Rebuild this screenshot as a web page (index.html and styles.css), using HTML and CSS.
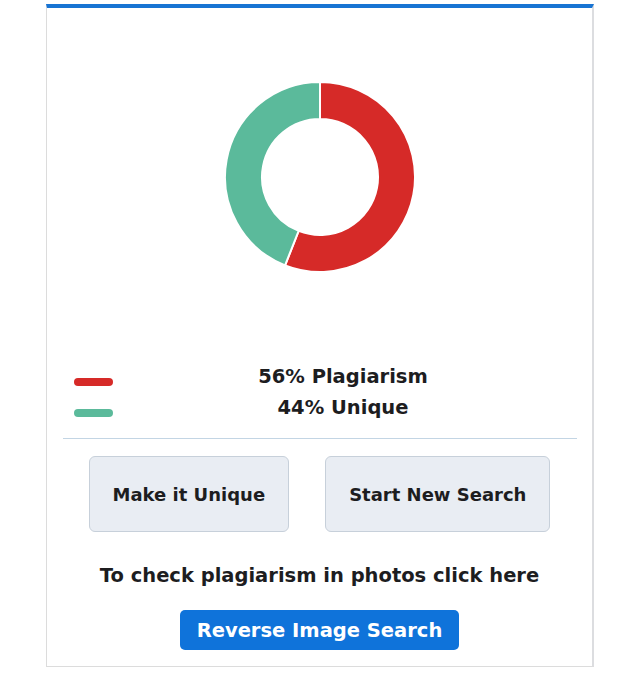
FILE: index.html
```html
<!DOCTYPE html>
<html lang="en">
<head>
    <meta charset="UTF-8">
    <meta name="viewport" content="width=device-width, initial-scale=1.0">
    <title>Plagiarism Report</title>
    <link rel="stylesheet" href="styles.css">
</head>
<body>
    <div class="page">
        <div class="result-card">
            <div class="chart">
                <svg width="192" height="192" viewBox="-96 -96 192 192">
                    <!-- 56% plagiarism, starts at 12 o'clock and runs clockwise -->
                    <path d="M 0 -95 A 95 95 0 1 1 -34.95 88.33 L -21.33 53.93 A 58 58 0 1 0 0 -58 Z" fill="#d62a28" stroke="#fff" stroke-width="2"/>
                    <path d="M -34.95 88.33 A 95 95 0 0 1 0 -95 L 0 -58 A 58 58 0 0 0 -21.33 53.93 Z" fill="#5bba9b" stroke="#fff" stroke-width="2"/>
                </svg>
            </div>

            <div class="legend">
                <span class="swatch red"></span>
                <span class="legend-text">56% Plagiarism</span>
                <span class="swatch green"></span>
                <span class="legend-text">44% Unique</span>
            </div>

            <hr class="divider">

            <div class="actions">
                <button class="btn-light" type="button">Make it Unique</button>
                <button class="btn-light" type="button">Start New Search</button>
            </div>

            <p class="photo-note">To check plagiarism in photos click here</p>
            <div class="photo-action">
                <button class="btn-blue" type="button">Reverse Image Search</button>
            </div>
        </div>
    </div>
</body>
</html>
```

FILE: styles.css
```css
/* General Reset */
* {
    margin: 0;
    padding: 0;
    box-sizing: border-box;
    font-family: 'DejaVu Sans', 'Liberation Sans', sans-serif;
}

body {
    background: #fff;
    color: #1d1d1f;
}

.page {
    padding: 4px 0 0 46px;
}

.result-card {
    width: 548px;
    height: 663px;
    border: 1px solid #dcdcdc;
    border-right: 2px solid #dcdde0;
    border-top: 4px solid #1874d3;
    padding-bottom: 16px;
}

.chart {
    display: flex;
    justify-content: center;
    padding-top: 73px;
    height: 357px;
}

.legend {
    display: grid;
    grid-template-columns: 39px 1fr;
    row-gap: 7px;
    align-items: start;
    padding: 0 19px 0 27px;
}

.swatch {
    display: block;
    height: 8px;
    margin-top: 13px;
    border-radius: 4px;
}

.swatch.red {
    background: #d62a28;
}

.swatch.green {
    background: #5bba9b;
}

.legend-text {
    text-align: center;
    font-size: 19.5px;
    font-weight: 700;
    line-height: 24px;
}

.divider {
    border: none;
    border-top: 1px solid #c3d5e4;
    margin: 18px 15px 17px 16px;
}

.actions {
    display: flex;
    justify-content: center;
    gap: 36px;
}

.btn-light {
    height: 76px;
    padding: 0 23px;
    background: #e9edf3;
    border: 1px solid #c7d0da;
    border-radius: 6px;
    font-size: 18px;
    font-weight: 700;
    color: #1d1d1f;
}

.photo-note {
    text-align: center;
    font-size: 19.5px;
    font-weight: 700;
    margin-top: 31px;
    line-height: 26px;
}

.photo-action {
    display: flex;
    justify-content: center;
    margin-top: 21px;
}

.btn-blue {
    height: 40px;
    padding: 0 17px;
    background: #0f73da;
    color: #fff;
    border: none;
    border-radius: 5px;
    font-size: 19.5px;
    font-weight: 700;
}
```
